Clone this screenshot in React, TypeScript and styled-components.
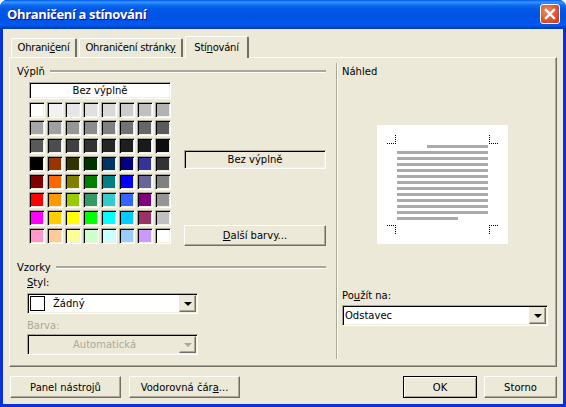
import React from "react";
import styled, { createGlobalStyle, css } from "styled-components";

const SWATCHES = [
  ["#ffffff", "#f2f2f2", "#e6e6e6", "#e0e0e0", "#d9d9d9", "#cccccc", "#c0c0c0", "#b3b3b3"],
  ["#a6a6a6", "#a0a0a0", "#969696", "#8c8c8c", "#808080", "#737373", "#666666", "#5a5a5a"],
  ["#595959", "#4d4d4d", "#404040", "#333333", "#262626", "#1f1f1f", "#1a1a1a", "#0d0d0d"],
  ["#000000", "#993300", "#333300", "#003300", "#003366", "#000080", "#333399", "#333333"],
  ["#800000", "#ff6600", "#808000", "#008000", "#008080", "#0000ff", "#666699", "#808080"],
  ["#ff0000", "#ff9900", "#99cc00", "#339966", "#33cccc", "#3366ff", "#800080", "#969696"],
  ["#ff00ff", "#ffcc00", "#ffff00", "#00ff00", "#00ffff", "#00ccff", "#993366", "#c0c0c0"],
  ["#ff99cc", "#ffcc99", "#ffff99", "#ccffcc", "#ccffff", "#99ccff", "#cc99ff", "#ffffff"],
];

const PREVIEW_ROWS = Array.from({ length: 11 }, (_, i) => i);

const sunken = css`
  border: 1px solid;
  border-color: #aca899 #fff #fff #aca899;
  box-shadow: inset 1px 1px 0 #000, inset -1px -1px 0 #f1efe2;
`;

const raised = css`
  border: 1px solid;
  border-color: #fff #716f64 #716f64 #fff;
  box-shadow: inset -1px -1px 0 #aca899;
`;

const GlobalStyle = createGlobalStyle`
  html, body {
    margin: 0;
    background: #fff;
  }
  * {
    box-sizing: border-box;
  }
`;

const Window = styled.div`
  width: 566px;
  height: 407px;
  display: flex;
  flex-direction: column;
  border-radius: 7px 7px 0 0;
  overflow: hidden;
  background: #0831d9;
  font: 10px "DejaVu Sans", Tahoma, sans-serif;
  color: #000;
`;

const TitleBar = styled.div`
  height: 29px;
  flex: none;
  display: flex;
  align-items: center;
  justify-content: space-between;
  padding: 0 6px 2px 7px;
  background: linear-gradient(
    180deg,
    #0058ee 0,
    #3a93ff 2px,
    #288eff 3px,
    #0d6cf0 5px,
    #0058e6 9px,
    #0054e3 16px,
    #0055eb 22px,
    #005bf5 25px,
    #0247c9 27px,
    #003bb0 29px
  );
`;

const TitleText = styled.span`
  font: bold 13px "Open Sans", sans-serif;
  letter-spacing: -0.35px;
  color: #fff;
  text-shadow: 1px 1px 0 #0f1089;
`;

const CloseButton = styled.button`
  width: 20px;
  height: 20px;
  padding: 0;
  display: flex;
  align-items: center;
  justify-content: center;
  border: 1px solid #fff;
  border-radius: 3px;
  background: radial-gradient(circle at 35% 35%, #e8906f, #d9512c 60%, #c33a16);
`;

const Body = styled.div`
  flex: 1;
  margin: 0 3px 3px;
  padding: 7px 6px 0;
  background: #ece9d8;
  display: flex;
  flex-direction: column;
`;

const TabRow = styled.div`
  height: 21px;
  display: flex;
  align-items: flex-end;
  padding-left: 2px;
`;

const Tab = styled.div<{ $active?: boolean; $width: number }>`
  position: relative;
  width: ${(p) => p.$width}px;
  height: ${(p) => (p.$active ? 22 : 19)}px;
  margin-bottom: ${(p) => (p.$active ? -1 : 0)}px;
  margin-right: ${(p) => (p.$active ? 0 : 2)}px;
  padding-top: ${(p) => (p.$active ? 5 : 3)}px;
  text-align: center;
  letter-spacing: -0.25px;
  background: #ece9d8;
  z-index: ${(p) => (p.$active ? 1 : 0)};
  border-top: 1px solid #fff;
  border-left: 1px solid #fff;
  border-right: 2px solid #716f64;
  border-radius: 2px 2px 0 0;
  white-space: nowrap;
`;

const Panel = styled.div`
  height: 310px;
  flex: none;
  display: flex;
  padding: 6px 0 0 7px;
  border: 1px solid;
  border-color: #fff #716f64 #716f64 #fff;
  box-shadow: inset -1px -1px 0 #aca899;
`;

const LeftPane = styled.div`
  width: 309px;
  flex: none;
  display: flex;
  flex-direction: column;
`;

const Divider = styled.div`
  width: 2px;
  height: 296px;
  flex: none;
  margin: -1px 4px 0 10px;
  background: #aca899;
  border-right: 1px solid #fff;
`;

const RightPane = styled.div`
  width: 206px;
  flex: none;
  display: flex;
  flex-direction: column;
`;

const SectionHeader = styled.div<{ $top?: number }>`
  height: 14px;
  margin-top: ${(p) => p.$top ?? 0}px;
  display: flex;
  align-items: center;
  gap: 5px;
  &::after {
    content: "";
    flex: 1;
    height: 2px;
    background: #aca899;
    border-bottom: 1px solid #fff;
  }
`;

const FillRow = styled.div`
  display: flex;
  gap: 13px;
  margin: 4px 0 0 12px;
`;

const SwatchColumn = styled.div`
  width: 142px;
  display: flex;
  flex-direction: column;
  gap: 3px;
`;

const NoFillCell = styled.div`
  ${sunken};
  height: 17px;
  background: #fff;
  display: flex;
  align-items: center;
  justify-content: center;
`;

const SwatchGrid = styled.div`
  display: grid;
  grid-template-columns: repeat(8, 16px);
  grid-auto-rows: 16px;
  gap: 2px;
`;

const Swatch = styled.div<{ $color: string }>`
  ${sunken};
  background: ${(p) => p.$color};
`;

const FillSide = styled.div`
  width: 142px;
  display: flex;
  flex-direction: column;
`;

const FillName = styled.div`
  ${sunken};
  height: 19px;
  margin-top: 68px;
  display: flex;
  align-items: center;
  justify-content: center;
`;

const Button = styled.button<{ $width?: number; $default?: boolean }>`
  ${raised};
  ${(p) =>
    p.$default &&
    css`
      border-color: #000;
      box-shadow: inset 1px 1px 0 #fff, inset -1px -1px 0 #aca899;
    `};
  width: ${(p) => (p.$width ? `${p.$width}px` : "100%")};
  height: 22px;
  padding: 0;
  background: #ece9d8;
  font: inherit;
  color: #000;
  flex: none;
`;

const MoreColors = styled(Button)`
  margin-top: 56px;
  height: 21px;
`;

const Field = styled.div`
  margin-left: 10px;
  width: 171px;
`;

const FieldLabel = styled.div<{ $top: number; $disabled?: boolean }>`
  height: 13px;
  line-height: 13px;
  margin-top: ${(p) => p.$top}px;
  margin-bottom: ${(p) => (p.$disabled ? 2 : 4)}px;
  color: ${(p) => (p.$disabled ? "#aca899" : "#000")};
`;

const Select = styled.div<{ $disabled?: boolean }>`
  ${sunken};
  height: 21px;
  padding: 1px;
  display: flex;
  align-items: center;
  background: ${(p) => (p.$disabled ? "#ece9d8" : "#fff")};
  color: ${(p) => (p.$disabled ? "#aca899" : "#000")};
`;

const SelectValue = styled.span<{ $center?: boolean }>`
  flex: 1;
  padding-left: 1px;
  text-align: ${(p) => (p.$center ? "center" : "left")};
`;

const StyleChip = styled.span`
  width: 15px;
  height: 15px;
  margin: 0 7px 0 1px;
  border: 1px solid #000;
  background: #fff;
`;

const ArrowButton = styled.span<{ $disabled?: boolean }>`
  ${raised};
  border-color: #ece9d8 #716f64 #716f64 #ece9d8;
  width: 17px;
  height: 17px;
  display: flex;
  align-items: center;
  justify-content: center;
  background: #ece9d8;
  &::before {
    content: "";
    border-style: solid;
    border-width: 4px 4px 0;
    border-color: ${(p) => (p.$disabled ? "#aca899" : "#000")} transparent transparent;
  }
`;

const PreviewLabel = styled.div`
  height: 14px;
  margin-top: 1px;
  line-height: 14px;
`;

const PreviewPage = styled.svg`
  display: block;
  width: 131px;
  height: 119px;
  margin: 46px 0 0 35px;
  background: #fff;
`;

const ApplyLabel = styled.div`
  height: 14px;
  line-height: 14px;
  margin: 45px 0 2px;
`;

const Footer = styled.div`
  display: flex;
  justify-content: space-between;
  padding: 9px 0 0 1px;
`;

const ButtonGroup = styled.div<{ $gap: number }>`
  display: flex;
  gap: ${(p) => p.$gap}px;
`;

const Key = styled.span`
  text-decoration: underline;
`;

// hx / vy: where the 9px dotted arm starts, x / y: the pixel row and column of the corner
function CropMark({ x, y, hx, vy }: { x: number; y: number; hx: number; vy: number }) {
  return (
    <path
      d={`M${hx} ${y + 0.5}h9M${x + 0.5} ${vy}v9`}
      fill="none"
      stroke="#000"
      strokeWidth="1"
      strokeDasharray="1 1"
      shapeRendering="crispEdges"
    />
  );
}

export default function App() {
  return (
    <>
      <GlobalStyle />
      <Window>
        <TitleBar>
          <TitleText>Ohraničení a stínování</TitleText>
          <CloseButton aria-label="Zavřít">
            <svg width="12" height="12" viewBox="0 0 12 12">
              <path d="M2 2L10 10M10 2L2 10" stroke="#fff" strokeWidth="2.4" strokeLinecap="square" />
            </svg>
          </CloseButton>
        </TitleBar>
        <Body>
          <TabRow>
            <Tab $width={66}>
              Ohrani<Key>č</Key>ení
            </Tab>
            <Tab $width={104}>
              Ohraničení stránk<Key>y</Key>
            </Tab>
            <Tab $active $width={64}>
              Stí<Key>n</Key>ování
            </Tab>
          </TabRow>
          <Panel>
            <LeftPane>
              <SectionHeader>Výplň</SectionHeader>
              <FillRow>
                <SwatchColumn>
                  <NoFillCell>Bez výplně</NoFillCell>
                  <SwatchGrid>
                    {SWATCHES.flat().map((color, i) => (
                      <Swatch key={i} $color={color} />
                    ))}
                  </SwatchGrid>
                </SwatchColumn>
                <FillSide>
                  <FillName>Bez výplně</FillName>
                  <MoreColors>
                    <Key>D</Key>alší barvy...
                  </MoreColors>
                </FillSide>
              </FillRow>
              <SectionHeader $top={14}>Vzorky</SectionHeader>
              <Field>
                <FieldLabel $top={2}>
                  <Key>S</Key>tyl:
                </FieldLabel>
                <Select>
                  <StyleChip />
                  <SelectValue>Žádný</SelectValue>
                  <ArrowButton />
                </Select>
                <FieldLabel $top={5} $disabled>
                  Barva:
                </FieldLabel>
                <Select $disabled>
                  <SelectValue $center>Automatická</SelectValue>
                  <ArrowButton $disabled />
                </Select>
              </Field>
            </LeftPane>
            <Divider />
            <RightPane>
              <PreviewLabel>Náhled</PreviewLabel>
              <PreviewPage viewBox="0 0 131 119">
                <CropMark x={18} y={18} hx={10} vy={10} />
                <CropMark x={112} y={18} hx={112} vy={10} />
                <CropMark x={18} y={100} hx={10} vy={100} />
                <CropMark x={112} y={100} hx={112} vy={100} />
                <rect x="50" y="20" width="61" height="3" fill="#aaa" />
                {PREVIEW_ROWS.map((i) => (
                  <rect key={i} x="20" y={26 + i * 6} width="91" height="3" fill="#aaa" />
                ))}
                <rect x="20" y="92" width="61" height="3" fill="#aaa" />
              </PreviewPage>
              <ApplyLabel>
                Po<Key>u</Key>žít na:
              </ApplyLabel>
              <Select>
                <SelectValue>Odstavec</SelectValue>
                <ArrowButton />
              </Select>
            </RightPane>
          </Panel>
          <Footer>
            <ButtonGroup $gap={8}>
              <Button $width={111}>
                Panel nástro<Key>j</Key>ů
              </Button>
              <Button $width={111}>
                Vodorovná čár<Key>a</Key>...
              </Button>
            </ButtonGroup>
            <ButtonGroup $gap={7}>
              <Button $width={74} $default>
                OK
              </Button>
              <Button $width={73}>Storno</Button>
            </ButtonGroup>
          </Footer>
        </Body>
      </Window>
    </>
  );
}
